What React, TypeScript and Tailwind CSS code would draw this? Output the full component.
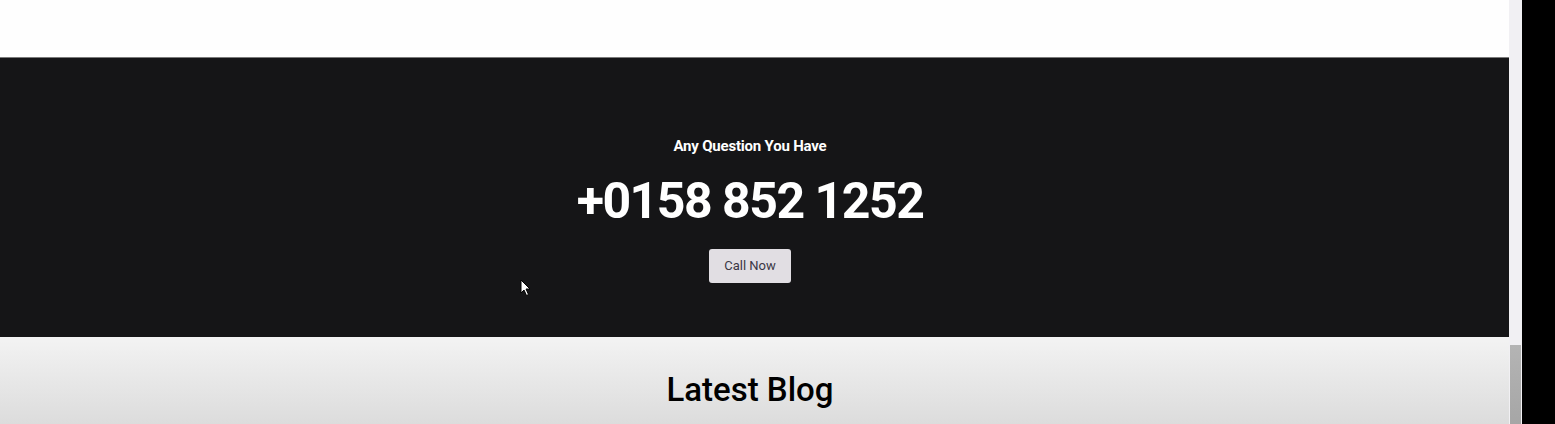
import React from "react";

export default function App() {
  return (
    <div className="flex h-[424px] w-[1555px] overflow-hidden bg-black" style={{ fontFamily: "Roboto, 'Liberation Sans', sans-serif" }}>
      <div className="relative flex w-[1509px] flex-col">
        <div className="h-[57px] bg-[#fefefe]" />
        <section className="flex h-[280px] flex-col items-center border-t border-[#7a7a7a] bg-[#151517] pr-[9px]">
          <p className="mt-[80px] text-[15px] font-bold leading-[17px] tracking-[-0.2px] text-white">Any Question You Have</p>
          <h2 className="mt-[20px] text-[50px] font-bold leading-[52px] tracking-[-1.5px] text-white">+0158 852 1252</h2>
          <button className="mt-[22px] h-[34px] w-[82px] rounded-[3px] bg-[#e1dee3] text-[13px] text-[#3b3745]">Call Now</button>
        </section>
        <section className="flex h-[87px] flex-col items-center bg-gradient-to-b from-[#f3f3f3] to-[#dcdcdc] pr-[9px]">
          <h2 className="mt-[33px] text-[33px] font-medium leading-[40px] text-black">Latest Blog</h2>
        </section>
        <svg className="absolute left-[520px] top-[279px]" width="12" height="18" viewBox="0 0 12 18">
          <path d="M1 1 L1 14 L4 11 L6.5 16.5 L8.5 15.5 L6 10 L10 10 Z" fill="white" stroke="black" strokeWidth="1" />
        </svg>
      </div>
      <div className="flex w-[13px] flex-col bg-[#f1f0f3]">
        <div className="flex-1" />
        <div className="mx-[1px] h-[79px] bg-gradient-to-b from-[#b4b4b4] to-[#a6a6a6]" />
      </div>
      <div className="flex-1 bg-black" />
    </div>
  );
}
